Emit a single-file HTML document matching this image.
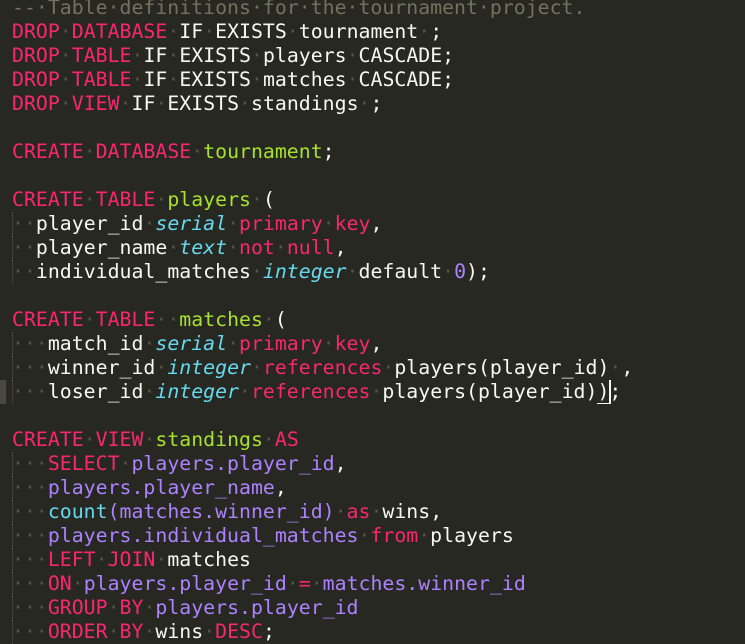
<!DOCTYPE html>
<html><head><meta charset="utf-8"><style>
html,body{margin:0;padding:0;background:#272822;width:745px;height:643px;overflow:hidden}
.ed{position:absolute;left:12px;top:-4px;font-family:"DejaVu Sans Mono","Liberation Mono",monospace;font-size:19.85px;line-height:24px;color:#F8F8F2}
.l{height:24px;position:relative;white-space:pre}
.d{color:#55554b}
.k{color:#F92672}.g{color:#A6E22E}.c{color:#66D9EF;font-style:italic}.f{color:#66D9EF}.p{color:#AE81FF}.cm{color:#75715E}
.ig{position:absolute;left:0;top:0;height:24px;border-left:1px dotted #55554b}
.mk{position:absolute;left:0;top:380px;width:6px;height:24px;background:#49483E}
.cur{border-right:2px solid #F8F8F2;margin-right:-2px}
.u{border-bottom:1px solid #F8F8F2}
</style></head><body>
<div class="mk"></div>
<div class="ed"><div class="l cm">--·Table·definitions·for·the·tournament·project.</div><div class="l"><span class="k">DROP</span><span class="d">·</span><span class="k">DATABASE</span><span class="d">·</span>IF<span class="d">·</span>EXISTS<span class="d">·</span>tournament<span class="d">·</span>;</div><div class="l"><span class="k">DROP</span><span class="d">·</span><span class="k">TABLE</span><span class="d">·</span>IF<span class="d">·</span>EXISTS<span class="d">·</span>players<span class="d">·</span>CASCADE;</div><div class="l"><span class="k">DROP</span><span class="d">·</span><span class="k">TABLE</span><span class="d">·</span>IF<span class="d">·</span>EXISTS<span class="d">·</span>matches<span class="d">·</span>CASCADE;</div><div class="l"><span class="k">DROP</span><span class="d">·</span><span class="k">VIEW</span><span class="d">·</span>IF<span class="d">·</span>EXISTS<span class="d">·</span>standings<span class="d">·</span>;</div><div class="l"> </div><div class="l"><span class="k">CREATE</span><span class="d">·</span><span class="k">DATABASE</span><span class="d">·</span><span class="g">tournament</span>;</div><div class="l"> </div><div class="l"><span class="k">CREATE</span><span class="d">·</span><span class="k">TABLE</span><span class="d">·</span><span class="g">players</span><span class="d">·</span>(</div><div class="l"><span class="ig"></span><span class="d">··</span>player_id<span class="d">·</span><span class="c">serial</span><span class="d">·</span><span class="k">primary</span><span class="d">·</span><span class="k">key</span>,</div><div class="l"><span class="ig"></span><span class="d">··</span>player_name<span class="d">·</span><span class="c">text</span><span class="d">·</span><span class="k">not</span><span class="d">·</span><span class="k">null</span>,</div><div class="l"><span class="ig"></span><span class="d">··</span>individual_matches<span class="d">·</span><span class="c">integer</span><span class="d">·</span>default<span class="d">·</span><span class="p">0</span>);</div><div class="l"> </div><div class="l"><span class="k">CREATE</span><span class="d">·</span><span class="k">TABLE</span><span class="d">··</span><span class="g">matches</span><span class="d">·</span>(</div><div class="l"><span class="ig"></span><span class="d">···</span>match_id<span class="d">·</span><span class="c">serial</span><span class="d">·</span><span class="k">primary</span><span class="d">·</span><span class="k">key</span>,</div><div class="l"><span class="ig"></span><span class="d">···</span>winner_id<span class="d">·</span><span class="c">integer</span><span class="d">·</span><span class="k">references</span><span class="d">·</span>players(player_id)<span class="d">·</span>,</div><div class="l"><span class="ig"></span><span class="d">···</span>loser_id<span class="d">·</span><span class="c">integer</span><span class="d">·</span><span class="k">references</span><span class="d">·</span>players(player_id)<span class="u cur">)</span>;</div><div class="l"> </div><div class="l"><span class="k">CREATE</span><span class="d">·</span><span class="k">VIEW</span><span class="d">·</span><span class="g">standings</span><span class="d">·</span><span class="k">AS</span></div><div class="l"><span class="ig"></span><span class="d">···</span><span class="k">SELECT</span><span class="d">·</span><span class="p">players.player_id</span>,</div><div class="l"><span class="ig"></span><span class="d">···</span><span class="p">players.player_name</span>,</div><div class="l"><span class="ig"></span><span class="d">···</span><span class="f">count</span><span class="p">(matches.winner_id)</span><span class="d">·</span><span class="k">as</span><span class="d">·</span>wins,</div><div class="l"><span class="ig"></span><span class="d">···</span><span class="p">players.individual_matches</span><span class="d">·</span><span class="k">from</span><span class="d">·</span>players</div><div class="l"><span class="ig"></span><span class="d">···</span><span class="k">LEFT</span><span class="d">·</span><span class="k">JOIN</span><span class="d">·</span>matches</div><div class="l"><span class="ig"></span><span class="d">···</span><span class="k">ON</span><span class="d">·</span><span class="p">players.player_id</span><span class="d">·</span><span class="k">=</span><span class="d">·</span><span class="p">matches.winner_id</span></div><div class="l"><span class="ig"></span><span class="d">···</span><span class="k">GROUP</span><span class="d">·</span><span class="k">BY</span><span class="d">·</span><span class="p">players.player_id</span></div><div class="l"><span class="ig"></span><span class="d">···</span><span class="k">ORDER</span><span class="d">·</span><span class="k">BY</span><span class="d">·</span>wins<span class="d">·</span><span class="k">DESC</span>;</div></div>
</body></html>
